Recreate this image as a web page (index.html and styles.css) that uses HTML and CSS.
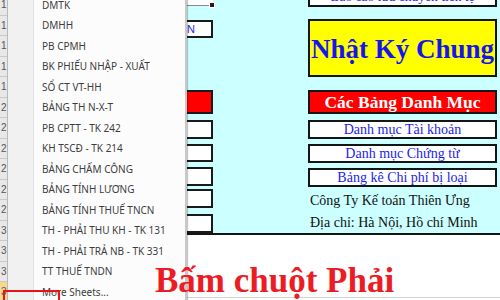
FILE: index.html
```html
<!DOCTYPE html>
<html lang="vi">
<head>
<meta charset="utf-8">
<title>Sheet menu</title>
<link rel="stylesheet" href="styles.css">
</head>
<body>
<div class="screen">
  <div class="rowhead">
    <div class="rh">1</div>
    <div class="rh">1</div>
    <div class="rh">1</div>
    <div class="rh">1</div>
    <div class="rh">1</div>
    <div class="rh">2</div>
    <div class="rh">2</div>
    <div class="rh">2</div>
    <div class="rh">2</div>
    <div class="rh">2</div>
    <div class="rh">2</div>
    <div class="rh">3</div>
    <div class="rh">3</div>
    <div class="rh">3</div>
    <div class="rh sel">3</div>
  </div>
  <div class="under"></div>
  <div class="area">
    <div class="panel">
      <div class="col-left">
        <div class="lbox lb-top"></div>
        <div class="lbox lb-2"><span class="lb-text">N</span></div>
        <div class="lbox red lb-3"></div>
        <div class="lbox lb-4"></div>
        <div class="lbox lb-5"></div>
        <div class="lbox lb-5"></div>
        <div class="lbox lb-7"></div>
        <div class="lbox lb-8"></div>
      </div>
      <div class="col-right">
        <div class="rbox rb-top">Báo cáo lưu chuyển tiền tệ</div>
        <div class="rbox yellow">Nhật Ký Chung</div>
        <div class="rbox red heading">Các Bảng Danh Mục</div>
        <div class="rbox link l1">Danh mục Tài khoản</div>
        <div class="rbox link l2">Danh mục Chứng từ</div>
        <div class="rbox link l2">Bảng kê Chi phí bị loại</div>
        <div class="info i1">Công Ty Kế toán Thiên Ưng</div>
        <div class="info i2">Địa chỉ: Hà Nội, Hồ chí Minh</div>
      </div>
    </div>
    <div class="below"></div>
  </div>

  <ul class="menu">
    <li>DMTK</li>
    <li>DMHH</li>
    <li>PB CPMH</li>
    <li>BK PHIẾU NHẬP - XUẤT</li>
    <li>SỔ CT VT-HH</li>
    <li>BẢNG TH N-X-T</li>
    <li>PB CPTT - TK 242</li>
    <li>KH TSCĐ - TK 214</li>
    <li>BẢNG CHẤM CÔNG</li>
    <li>BẢNG TÍNH LƯƠNG</li>
    <li>BẢNG TÍNH THUẾ TNCN</li>
    <li>TH - PHẢI THU KH - TK 131</li>
    <li>TH - PHẢI TRẢ NB - TK 331</li>
    <li>TT THUẾ TNDN</li>
    <li>More Sheets...</li>
  </ul>

  <div class="callout">Bấm chuột Phải</div>
  <div class="mark"></div>
</div>
</body>
</html>
```

FILE: styles.css
```css
html, body {
  margin: 0;
  padding: 0;
  background: #ffffff;
}

.screen {
  position: relative;
  width: 500px;
  height: 300px;
  overflow: hidden;
  display: grid;
  grid-template-columns: 8px 179px 313px;
  font-family: "Liberation Serif", "Times New Roman", serif;
}

/* row headers */
.rowhead {
  display: flex;
  flex-direction: column;
  margin-top: -5px;
  background: #e8e8e8;
  border-right: 1px solid #b9b9b9;
  box-sizing: border-box;
  overflow: hidden;
}
.rh {
  flex: 0 0 auto;
  height: 20.5px;
  box-sizing: border-box;
  border-bottom: 1px solid #c9c9c9;
  font-family: "Liberation Sans", Arial, sans-serif;
  font-size: 10px;
  line-height: 20px;
  color: #555;
  padding-left: 1px;
  white-space: nowrap;
}
.rh.sel {
  background: #f6d98e;
}

.under {
  background: #fff;
}

/* sheet area */
.area {
  display: flex;
  flex-direction: column;
}
.panel {
  height: 235px;
  box-sizing: border-box;
  background: #ccffff;
  border-bottom: 2px solid #151515;
  display: flex;
}
.below {
  flex: 1;
  border-bottom: 1px solid #d2d2d2;
  margin-bottom: 2px;
}

.col-left {
  width: 26px;
  display: flex;
  flex-direction: column;
}
.lbox {
  box-sizing: border-box;
  background: #fff;
  border: 2px solid #1a1a1a;
  border-left: 0;
}
.lb-top {
  position: relative;
  height: 6px;
  border: 0;
  border-bottom: 1px solid #8a8a8a;
}
.lb-top::after {
  content: "";
  position: absolute;
  right: -2px;
  bottom: -3px;
  width: 4px;
  height: 4px;
  background: #3a1414;
  border: 1px solid #fff;
}
.lb-2 {
  margin-top: 14px;
  height: 18px;
  overflow: hidden;
}
.lb-text {
  display: block;
  font-family: "Liberation Sans", Arial, sans-serif;
  font-size: 11px;
  line-height: 14px;
  color: #2a2ae8;
  padding-left: 0;
}
.lbox.red {
  background: #ff0000;
}
.lb-3 { margin-top: 52px; height: 24px; }
.lb-4 { margin-top: 6px; height: 19px; }
.lb-5 { margin-top: 5px; height: 19px; }
.lb-7 { margin-top: 3px; height: 19px; }
.lb-8 { margin-top: 6px; height: 19px; }

.col-right {
  width: 189px;
  margin-left: 95px;
  display: flex;
  flex-direction: column;
}
.rbox {
  box-sizing: border-box;
  border: 2px solid #151515;
  display: flex;
  align-items: center;
  justify-content: center;
  white-space: nowrap;
  overflow: hidden;
}
.rb-top {
  margin-top: -12px;
  height: 19px;
  background: #fff;
  border-top: 0;
  align-items: flex-start;
  font-size: 13.5px;
  line-height: 15px;
  color: #1c1cf0;
  padding-top: 1px;
}
.yellow {
  margin-top: 12px;
  height: 58px;
  background: #ffff00;
  color: #1515ee;
  font-weight: bold;
  font-size: 27px;
  padding-top: 2px;
}
.rbox.red {
  background: #ff0000;
}
.heading {
  margin-top: 13px;
  height: 24px;
  color: #fff;
  font-weight: bold;
  font-size: 17.5px;
}
.link {
  height: 19px;
  background: #fff;
  color: #1c1cf0;
  font-size: 14px;
  line-height: 15px;
}
.l1 { margin-top: 6px; }
.l2 { margin-top: 5px; }

.info {
  padding-left: 2px;
  font-size: 14px;
  color: #111;
  white-space: nowrap;
}
.i1 { margin-top: 3px; height: 22px; line-height: 22px; }
.i2 { height: 21px; line-height: 21px; }

/* context menu (overlay) */
.menu {
  position: absolute;
  left: 8px;
  top: -5.25px;
  width: 177px;
  height: 320px;
  margin: 0;
  padding: 0;
  list-style: none;
  background: linear-gradient(to right, #f1f1f1 0, #f1f1f1 25px, #e2e2e2 25px, #e2e2e2 26px, #fcfcfc 26px);
  border-right: 1px solid #c8c8c8;
  box-shadow: 2px 0 1px rgba(0, 0, 0, 0.22);
}
.menu li {
  height: 20.5px;
  line-height: 20.5px;
  padding-left: 34px;
  font-family: "Noto Sans", "Open Sans", sans-serif;
  font-size: 10px;
  color: #3d3d3d;
  white-space: nowrap;
}

/* annotation overlays */
.callout {
  position: absolute;
  left: 155px;
  top: 263px;
  font-family: "Liberation Serif", "Times New Roman", serif;
  font-weight: bold;
  font-size: 35px;
  line-height: 35px;
  color: #ec1c24;
  white-space: nowrap;
}
.mark {
  position: absolute;
  left: 3px;
  top: 290px;
  width: 57px;
  height: 20px;
  box-sizing: border-box;
  border: 2px solid #e8141c;
}
```
